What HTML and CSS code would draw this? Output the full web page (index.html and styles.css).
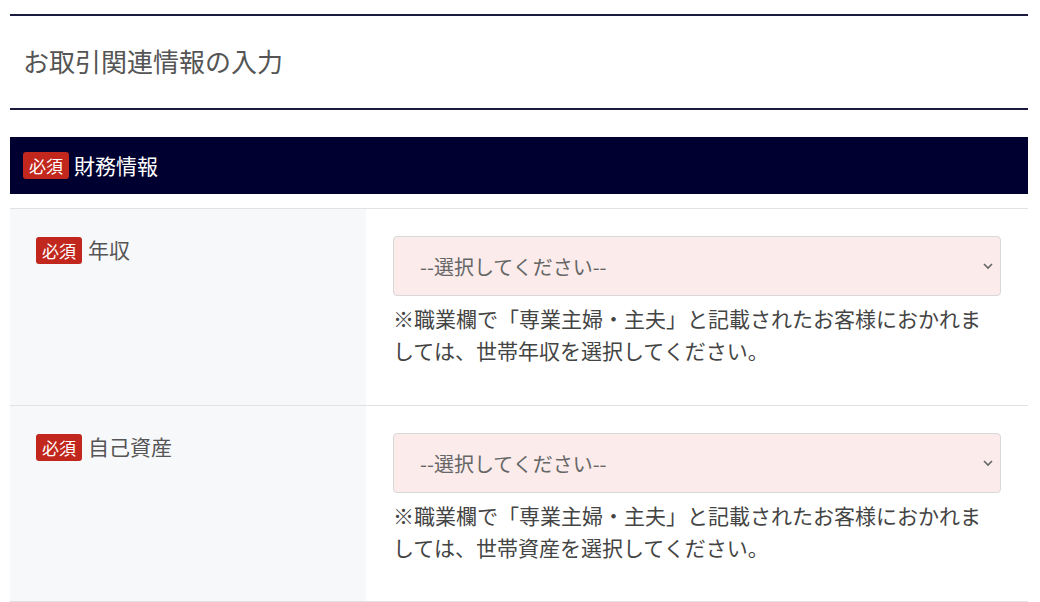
FILE: index.html
```html
<!DOCTYPE html>
<html lang="ja">
<head>
<meta charset="utf-8">
<title>お取引関連情報の入力</title>
<link rel="stylesheet" href="styles.css">
</head>
<body>
<div class="page">
  <div class="page-head">
    <h1 class="page-title">お取引関連情報の入力</h1>
  </div>
  <section class="section">
    <h2 class="section-bar"><span class="badge">必須</span><span class="section-name">財務情報</span></h2>
    <div class="rows">
      <div class="row">
        <div class="row-label"><span class="badge">必須</span><span class="label-text">年収</span></div>
        <div class="row-field">
          <select class="select"><option>--選択してください--</option></select>
          <p class="note">※職業欄で「専業主婦・主夫」と記載されたお客様におかれましては、世帯年収を選択してください。</p>
        </div>
      </div>
      <div class="row">
        <div class="row-label"><span class="badge">必須</span><span class="label-text">自己資産</span></div>
        <div class="row-field">
          <select class="select"><option>--選択してください--</option></select>
          <p class="note">※職業欄で「専業主婦・主夫」と記載されたお客様におかれましては、世帯資産を選択してください。</p>
        </div>
      </div>
    </div>
  </section>
</div>
</body>
</html>
```
FILE: styles.css
```css
* { box-sizing: border-box; }
html, body { margin: 0; padding: 0; background: #fff; }
body {
  font-family: "Noto Sans CJK JP", "Noto Sans", sans-serif;
  color: #555;
}
.page {
  margin: 0 12px 0 10px;
  padding-top: 14px;
}
.page-head {
  border-top: 2px solid #1b1b40;
  border-bottom: 2px solid #1b1b40;
  height: 96px;
  display: flex;
  align-items: center;
  padding-left: 13px;
}
.page-title {
  margin: 0;
  font-size: 26px;
  font-weight: normal;
  line-height: 1;
  color: #555;
  padding-bottom: 2px;
}
.section { margin-top: 27px; }
.section-bar {
  margin: 0;
  height: 57px;
  background: #000030;
  display: flex;
  align-items: center;
  padding-left: 13px;
  font-weight: normal;
}
.section-name {
  color: #fff;
  font-size: 21px;
  line-height: 1;
  margin-left: 5px;
}
.badge {
  display: inline-flex;
  align-items: center;
  justify-content: center;
  width: 46px;
  height: 27px;
  background: #c1271d;
  color: #fff;
  font-size: 17px;
  line-height: 1;
  border-radius: 3px;
}
.rows {
  margin-top: 14px;
  border-top: 1px solid #e2e2e2;
}
.row {
  display: flex;
  border-bottom: 1px solid #e2e2e2;
}
.row-label {
  width: 356px;
  background: #f7f8fa;
  padding: 28px 0 0 26px;
  display: flex;
  align-items: flex-start;
}
.label-text {
  font-size: 21px;
  line-height: 25px;
  color: #555;
  margin-left: 6px;
}
.row-field {
  flex: 1;
  padding: 27px 27px 38px 27px;
}
.row:first-child .row-field {
  padding-bottom: 39px;
}
.select {
  display: block;
  width: 608px;
  height: 60px;
  appearance: none;
  -webkit-appearance: none;
  background: #fbebeb url("data:image/svg+xml,%3Csvg xmlns='http://www.w3.org/2000/svg' width='12' height='8' viewBox='0 0 12 8'%3E%3Cpath d='M2 2l4 4 4-4' fill='none' stroke='%23666' stroke-width='1.6'/%3E%3C/svg%3E") no-repeat right 6px center;
  border: 1px solid #d8d8d8;
  border-radius: 4px;
  padding: 0 0 0 26px;
  font-family: inherit;
  font-size: 20px;
  color: #666;
}
.note {
  margin: 6px 0 0;
  font-size: 21px;
  line-height: 32px;
  color: #444;
  width: 608px;
}
```
